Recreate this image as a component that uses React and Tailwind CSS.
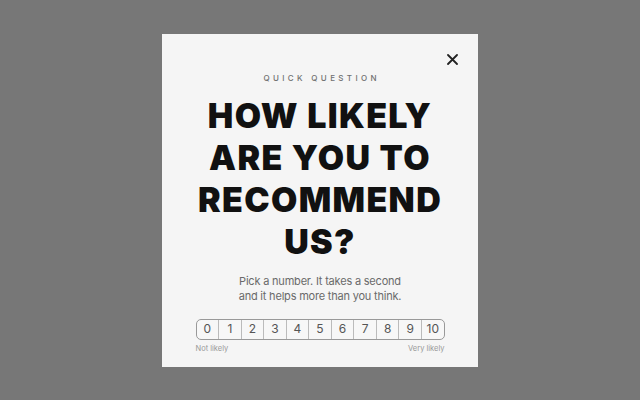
export default function App() {
  const nums = [0, 1, 2, 3, 4, 5, 6, 7, 8, 9, 10];
  return (
    <div className="w-[640px] h-[400px] bg-[#777777] flex items-center justify-center" style={{ fontFamily: 'Inter, "Liberation Sans", sans-serif' }}>
      <div className="relative w-[316px] h-[333px] bg-[#f5f5f5] flex flex-col items-center pt-[40px]">
        <button className="absolute right-[20px] top-[20px] w-[12px] h-[12px] flex items-center justify-center text-[#222]">
          <svg width="11" height="11" viewBox="0 0 11 11"><path d="M1 1L10 10M10 1L1 10" stroke="#222" strokeWidth="1.8" strokeLinecap="round" /></svg>
        </button>
        <div className="text-[8px] tracking-[0.42em] text-[#707070] leading-none font-medium pl-[0.42em]">QUICK QUESTION</div>
        <h1 className="mt-[13px] text-[34px] leading-[42px] font-black text-[#111] text-center tracking-[0.04em]">
          HOW LIKELY<br />ARE YOU TO<br />RECOMMEND<br />US?
        </h1>
        <p className="mt-[11px] text-[11px] leading-[15.5px] text-[#6a6a6a] text-center tracking-[-0.2px]">
          Pick a number. It takes a second<br />and it helps more than you think.
        </p>
        <div className="mt-[14px] w-[249px]">
          <div className="flex h-[21px] border border-[#999] rounded-[5px] overflow-hidden bg-[#f7f7f7]">
            {nums.map((n, i) => (
              <div key={n} className={`flex-1 flex items-center justify-center text-[12px] text-[#555] ${i > 0 ? 'border-l border-[#bbb]' : ''}`}>{n}</div>
            ))}
          </div>
          <div className="flex justify-between mt-[3px] text-[7.5px] text-[#999]">
            <span>Not likely</span>
            <span>Very likely</span>
          </div>
        </div>
      </div>
    </div>
  );
}
